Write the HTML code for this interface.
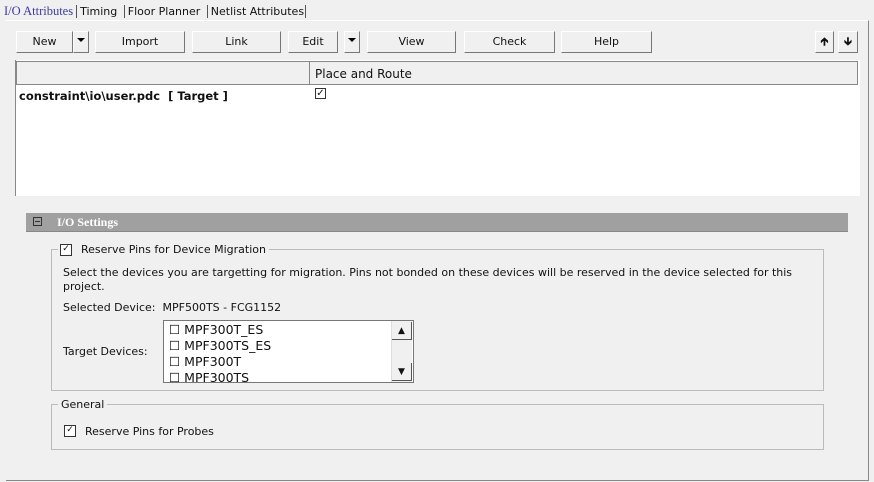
<!DOCTYPE html>
<html><head><style>
body{margin:0;width:874px;height:482px;background:#f0f0f0;font-family:"DejaVu Sans","Liberation Sans",sans-serif;font-size:11px;color:#111;position:relative;overflow:hidden}
.a{position:absolute}
.btn{position:absolute;top:31px;height:22px;background:#f0f0f0;border:1px solid #fff;border-right-color:#777;border-bottom-color:#777;box-sizing:border-box;text-align:center;line-height:20px;font-size:11px}
.dd{position:absolute;top:31px;height:22px;width:16px;border:1px solid #fff;border-right-color:#777;border-bottom-color:#777;box-sizing:border-box}
.dd:after{content:"";position:absolute;left:3px;top:6px;border-left:4px solid transparent;border-right:4px solid transparent;border-top:4px solid #000}
.cb{position:absolute;width:10px;height:10px;border:1px solid #333;background:#fff;font-size:10px;line-height:9px;text-align:center}
</style></head><body>
<div class="a" style="left:4px;top:4px;font-size:11px;white-space:nowrap"><span style="color:#3a3aa0;font-family:'Liberation Serif',serif;font-size:12.5px">I/O Attributes</span><span style="border-left:1px solid #555;margin:0 3px"></span>Timing <span style="border-left:1px solid #555;margin:0 3px"></span>Floor Planner <span style="border-left:1px solid #555;margin:0 3px"></span>Netlist Attributes<span style="border-left:1px solid #555;margin-left:1px"></span></div>
<div class="a" style="left:6px;top:20px;width:862px;height:459px;border-top:1px solid #fff;border-right:1px solid #888;border-bottom:1px solid #888"></div>
<div class="btn" style="left:16px;width:57px">New</div><div class="dd" style="left:73px"></div>
<div class="btn" style="left:95px;width:90px">Import</div>
<div class="btn" style="left:192px;width:89px">Link</div>
<div class="btn" style="left:288px;width:50px">Edit</div><div class="dd" style="left:344px"></div>
<div class="btn" style="left:367px;width:89px">View</div>
<div class="btn" style="left:464px;width:91px">Check</div>
<div class="btn" style="left:561px;width:91px">Help</div>
<div class="btn" style="left:815px;width:19px;font-weight:bold">&#129137;</div>
<div class="btn" style="left:838px;width:20px;font-weight:bold">&#129139;</div>
<div class="a" style="left:15px;top:60px;width:844px;height:136px;background:#fff;border-left:1px solid #888"></div>
<div class="a" style="left:16px;top:61px;width:842px;height:24px;background:#f0f0f0;border:1px solid #888;box-sizing:border-box"></div>
<div class="a" style="left:309px;top:61px;height:24px;border-left:1px solid #888"></div>
<div class="a" style="left:315px;top:67px;font-size:12px">Place and Route</div>
<div class="a" style="left:19px;top:89px;font-weight:bold;font-size:11.5px">constraint\io\user.pdc&nbsp; [ Target ]</div>
<div class="cb" style="left:315px;top:88px;width:9px;height:9px">✓</div>
<div class="a" style="left:26px;top:213px;width:822px;height:18px;background:#a0a0a0;border-bottom:1px solid #888"></div>
<div class="a" style="left:33px;top:217px;width:7px;height:7px;border:1px solid #333"><div style="position:absolute;left:1px;top:3px;width:5px;height:1px;background:#333"></div></div>
<div class="a" style="left:57px;top:215px;color:#fff;font-weight:bold;font-family:'Liberation Serif',serif;font-size:12px">I/O Settings</div>
<div class="a" style="left:51px;top:249px;width:771px;height:140px;border:1px solid #bbb"></div>
<div class="a" style="left:58px;top:242px;background:#f0f0f0;padding:0 4px 0 2px;height:14px;width:205px"></div>
<div class="cb" style="left:60px;top:244px;font-size:9px">✓</div>
<div class="a" style="left:81px;top:243px">Reserve Pins for Device Migration</div>
<div class="a" style="left:63px;top:266px;width:750px;line-height:14px">Select the devices you are targetting for migration. Pins not bonded on these devices will be reserved in the device selected for this project.</div>
<div class="a" style="left:63px;top:301px">Selected Device:&nbsp; MPF500TS - FCG1152</div>
<div class="a" style="left:63px;top:345px">Target Devices:</div>
<div class="a" style="left:163px;top:320px;width:249px;height:61px;background:#fff;border:1px solid #777;overflow:hidden;font-size:12.5px;line-height:16px">
<div style="padding:1px 0 0 5px">☐ MPF300T_ES<br>☐ MPF300TS_ES<br>☐ MPF300T<br>☐ MPF300TS</div>
<div style="position:absolute;right:1px;top:0;width:20px;height:61px;background:#f0f0f0;border-left:1px solid #ddd"></div>
<div style="position:absolute;right:1px;top:1px;width:20px;height:18px;border-right:1px solid #555;border-bottom:1px solid #555;box-sizing:border-box;font-size:9px;text-align:center;line-height:18px">▲</div>
<div style="position:absolute;right:1px;bottom:1px;width:20px;height:18px;border-right:1px solid #555;border-bottom:1px solid #555;box-sizing:border-box;font-size:9px;text-align:center;line-height:18px">▼</div>
</div>
<div class="a" style="left:51px;top:404px;width:771px;height:44px;border:1px solid #bbb"></div>
<div class="a" style="left:58px;top:398px;background:#f0f0f0;padding:0 3px">General</div>
<div class="cb" style="left:64px;top:425px;font-size:9px">✓</div>
<div class="a" style="left:85px;top:425px">Reserve Pins for Probes</div>
</body></html>
